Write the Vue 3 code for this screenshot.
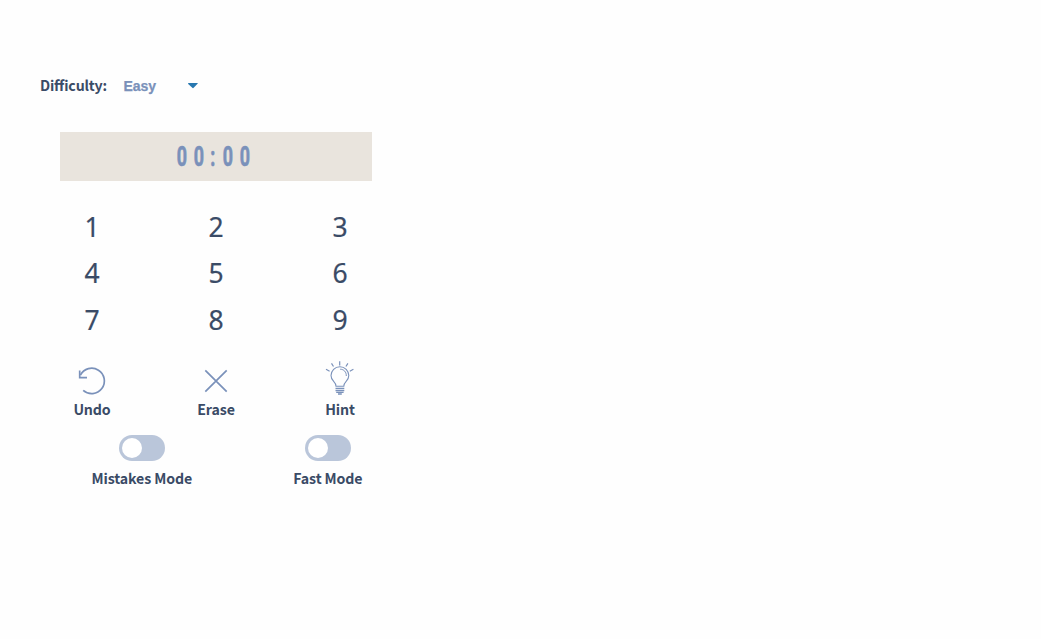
<script setup>
const time = [
  { text: '0', width: 17.5 },
  { text: '0', width: 16.5 },
  { text: ':', width: 12 },
  { text: '0', width: 16.5 },
  { text: '0', width: 18.5 },
]
const modes = ['Mistakes Mode', 'Fast Mode']
</script>

<template>
  <main class="game">
    <div class="difficulty">
      <span class="label">Difficulty:</span>
      <button class="select">
        <span>Easy</span>
        <svg width="10" height="6" viewBox="0 0 10 6"><path d="M0 .5Q0 0 .7 0H9.3Q10 0 9.8 .6L5.4 5.1Q5 5.4 4.6 5.1L.2 .9Z" fill="#2878b0" /></svg>
      </button>
    </div>

    <div class="timer">
      <span v-for="(part, i) in time" :key="i" class="cell" :style="{ width: part.width + 'px' }">
        <span class="glyph">{{ part.text }}</span>
      </span>
    </div>

    <div class="numbers">
      <button v-for="n in 9" :key="n">{{ n }}</button>
    </div>

    <div class="actions">
      <button class="action">
        <svg width="36" height="36" viewBox="0 0 36 36">
          <path d="M6.4 14.1A12.7 12.7 0 1 1 9.2 29.4" stroke-width="1.7" />
          <path d="M5.7 9.4V16.7H13" stroke-width="1.7" />
        </svg>
        <span class="label">Undo</span>
      </button>
      <button class="action">
        <svg width="36" height="36" viewBox="0 0 36 36">
          <path d="M7.3 9.3L28.7 30.7M28.7 9.3L7.3 30.7" stroke-width="1.7" />
        </svg>
        <span class="label">Erase</span>
      </button>
      <button class="action">
        <svg width="36" height="36" viewBox="0 0 36 36">
          <path d="M17.7 .3V4.4M9.5 2.4L11.5 5.5M25.9 2.4L23.9 5.5M4 8.3L7.6 10.2M31.4 8.3L27.8 10.2" stroke-width="1.2" />
          <path d="M14 25.3C14 20.5 9 20.3 9 14.6A8.9 8.9 0 0 1 26.8 14.6C26.8 20.3 21.8 20.5 21.8 25.3Z" stroke-width="1.1" />
          <path d="M18.2 8.2C22 8.3 24.4 11 24.3 15" stroke-width="1" />
          <path d="M13.5 27.3H22.3M13.5 29.5H22.3M14.2 31.4H21.6M16 33H19.8" stroke-width="1.3" />
        </svg>
        <span class="label">Hint</span>
      </button>
    </div>

    <div class="modes">
      <div v-for="mode in modes" :key="mode" class="mode">
        <button class="switch" role="switch" aria-checked="false" :aria-label="mode"><span class="knob"></span></button>
        <span class="label">{{ mode }}</span>
      </div>
    </div>
  </main>
</template>

<style>
body {
  background: #fefefe;
}
</style>

<style scoped>
.game {
  width: 372px;
  padding-top: 70px;
  color: #3a4b66;
}
button {
  margin: 0;
  padding: 0;
  border: 0;
  background: none;
  color: inherit;
}
svg {
  display: block;
  flex: none;
}
.label {
  font: 700 14.2px/20px "Noto Sans CJK SC", "Noto Sans", sans-serif;
  font-feature-settings: "liga" 1;
  letter-spacing: -0.12px;
  white-space: nowrap;
}
.difficulty {
  display: flex;
  align-items: center;
  height: 32px;
  margin-left: 40px;
}
.difficulty .label {
  width: 67px;
  margin-top: -2px;
  letter-spacing: -0.2px;
}
.select {
  display: flex;
  align-items: center;
  justify-content: space-between;
  width: 74.5px;
  margin-left: 16.4px;
  color: #7a91ba;
  font: 700 14px/20px "Liberation Sans", Arial, sans-serif;
  -webkit-text-stroke: 0.25px #7a91ba;
}
.timer {
  display: flex;
  align-items: center;
  justify-content: center;
  box-sizing: border-box;
  height: 49px;
  margin: 30px 0 0 60px;
  padding-right: 5px;
  background: #e9e4dd;
  color: #7a91ba;
}
.cell {
  display: flex;
  justify-content: center;
}
.glyph {
  font: 700 27px/48px Roboto, sans-serif;
  -webkit-text-stroke: 0.7px #7a91ba;
  transform: scaleX(0.66);
}
.numbers {
  display: grid;
  grid-template-columns: repeat(3, 64px);
  grid-auto-rows: 46.5px;
  justify-content: space-between;
  margin: 22.3px 0 0 60px;
}
.numbers button {
  font: 400 26.5px/46px "Noto Sans", sans-serif;
  -webkit-text-stroke: 0.2px #3a4b66;
}
.actions {
  display: flex;
  justify-content: space-between;
  margin: 18.2px 0 0 60px;
}
.action {
  display: flex;
  flex-direction: column;
  align-items: center;
  width: 64px;
}
.action svg {
  fill: none;
  stroke: #7a91ba;
  margin-bottom: 2px;
}
.modes {
  display: flex;
  justify-content: space-between;
  margin: 16px 9.5px 0 91.5px;
}
.mode {
  display: flex;
  flex-direction: column;
  align-items: center;
  gap: 7px;
}
.switch {
  display: flex;
  align-items: center;
  width: 46px;
  height: 26px;
  padding-left: 3px;
  border-radius: 13px;
  background: #bac6da;
}
.knob {
  width: 20px;
  height: 20px;
  border-radius: 50%;
  background: #fff;
}
</style>
